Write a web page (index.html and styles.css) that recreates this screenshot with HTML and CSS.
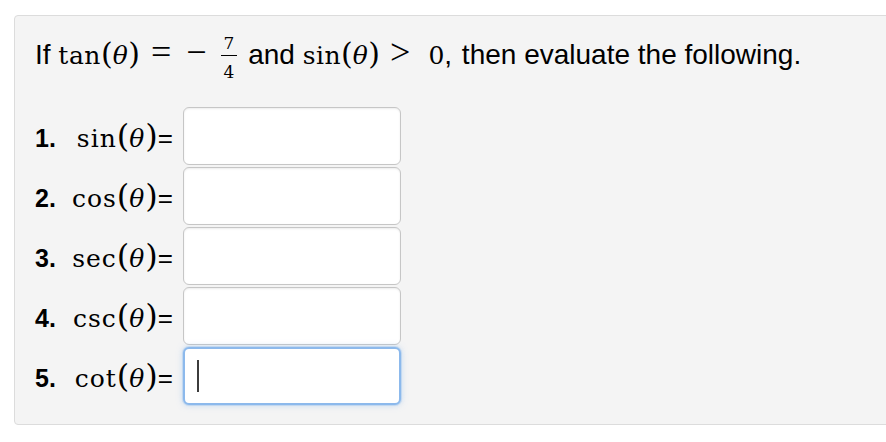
FILE: index.html
```html
<!DOCTYPE html>
<html lang="en">
<head>
<meta charset="utf-8">
<title>Trig evaluation</title>
<link rel="stylesheet" href="styles.css">
</head>
<body>
<div class="panel">
  <p class="question">If <span class="m">tan<span class="p">(</span><i>θ</i><span class="p">)</span></span><span class="op eq">=</span><span class="op minus">−</span><span class="frac"><span class="num">7</span><span class="den">4</span></span> and <span class="m">sin<span class="p">(</span><i>θ</i><span class="p">)</span></span><span class="op gt">&gt;</span><span class="m zero">0</span><span class="comma">,</span> then evaluate the following.</p>
  <ol class="rows">
    <li class="row"><div class="label"><b class="n">1.</b><span class="expr"><span class="m">sin<span class="p">(</span><i>θ</i><span class="p">)</span></span>=</span></div><div class="answer"></div></li>
    <li class="row"><div class="label"><b class="n">2.</b><span class="expr"><span class="m">cos<span class="p">(</span><i>θ</i><span class="p">)</span></span>=</span></div><div class="answer"></div></li>
    <li class="row"><div class="label"><b class="n">3.</b><span class="expr"><span class="m">sec<span class="p">(</span><i>θ</i><span class="p">)</span></span>=</span></div><div class="answer"></div></li>
    <li class="row"><div class="label"><b class="n">4.</b><span class="expr"><span class="m">csc<span class="p">(</span><i>θ</i><span class="p">)</span></span>=</span></div><div class="answer"></div></li>
    <li class="row"><div class="label"><b class="n">5.</b><span class="expr"><span class="m">cot<span class="p">(</span><i>θ</i><span class="p">)</span></span>=</span></div><div class="answer focused"><span class="caret"></span></div></li>
  </ol>
</div>
</body>
</html>
```

FILE: styles.css
```css
html, body {
  margin: 0;
  padding: 0;
  overflow: hidden;
  background: #ffffff;
}

body {
  font-family: "Liberation Sans", Arial, Helvetica, sans-serif;
  color: #000;
}

.panel {
  box-sizing: border-box;
  width: 900px;
  height: 410px;
  margin: 15px 0 0 14px;
  padding: 15px 0 18px 20px;
  background: #f4f4f4;
  border: 1px solid #dcdcdc;
  border-radius: 4px;
}

.question {
  margin: 0;
  height: 48px;
  font-size: 28px;
  line-height: 48px;
  white-space: nowrap;
}

.m {
  font-family: "DejaVu Serif", "Liberation Serif", serif;
  font-size: 25px;
  line-height: 1;
  letter-spacing: 0.5px;
}

.m i {
  font-style: italic;
}

.p {
  font-size: 30px;
  letter-spacing: 0;
}

.op {
  font-family: "Liberation Serif", "Times New Roman", serif;
  font-size: 36px;
  line-height: 1;
}

.eq {
  margin: 0 15px 0 11px;
}

.minus {
  margin-right: 14px;
}

.gt {
  margin: 0 18px 0 10px;
}

.zero {
  letter-spacing: 0;
}

.comma {
  margin-right: 2px;
}

.frac {
  display: inline-flex;
  flex-direction: column;
  align-items: center;
  vertical-align: 15px;
  margin-right: 3px;
  font-family: "DejaVu Serif", "Liberation Serif", serif;
  font-size: 17px;
  line-height: 18px;
}

.num {
  padding-bottom: 3px;
}

.den {
  align-self: stretch;
  text-align: center;
  border-top: 1px solid #000;
  padding: 7px 3px 0;
}

.rows {
  list-style: none;
  margin: 27px 0 0;
  padding: 0;
}

.row {
  display: grid;
  grid-template-columns: 148px 218px;
  height: 60px;
  align-items: center;
}

.label {
  display: flex;
  align-items: baseline;
  justify-content: space-between;
  padding: 0 10px 0 0;
  font-size: 25px;
  line-height: 1;
}

.label .m {
  letter-spacing: 1px;
}

.label .p {
  font-size: 32px;
  letter-spacing: 0;
}

.n {
  font-weight: bold;
}

.expr {
  white-space: nowrap;
  font-size: 26px;
}

.answer {
  box-sizing: border-box;
  height: 58px;
  display: flex;
  align-items: center;
  padding-left: 13px;
  background: #fff;
  border: 1px solid #c6c6c6;
  border-radius: 6px;
  box-shadow: inset 0 1px 2px rgba(0, 0, 0, 0.08);
}

.answer.focused {
  border: 2px solid #8cb9ec;
  padding-left: 12px;
  box-shadow: 0 0 0 1px rgba(140, 185, 236, 0.3), 0 0 6px rgba(140, 185, 236, 0.55);
}

.caret {
  width: 2px;
  height: 32px;
  background: #3c3c3c;
}
```
